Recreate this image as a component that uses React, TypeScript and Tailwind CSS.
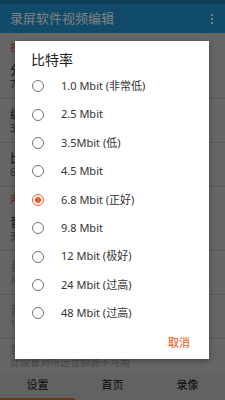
const font = { fontFamily: '"Noto Sans", "Noto Sans CJK SC", sans-serif' };

const rates = [
  "1.0 Mbit (非常低)",
  "2.5 Mbit",
  "3.5Mbit (低)",
  "4.5 Mbit",
  "6.8 Mbit (正好)",
  "9.8 Mbit",
  "12 Mbit (极好)",
  "24 Mbit (过高)",
  "48 Mbit (过高)",
];

function SettingRow({ title, value, muted }: { title: string; value: string; muted?: boolean }) {
  return (
    <div className="flex h-[44px] flex-col justify-center border-b border-[#b0b0b0] px-[10px]">
      <span className={`text-[12px] leading-[15px] ${muted ? "text-[#9a9a9a]" : "text-[#222]"}`}>{title}</span>
      <span className={`text-[10px] leading-[13px] ${muted ? "text-[#9a9a9a]" : "text-[#555]"}`}>{value}</span>
    </div>
  );
}

export default function App() {
  const selected = 4;
  return (
    <div className="relative h-[400px] w-[225px] overflow-hidden bg-[#cdcdcd]" style={font}>
      <div className="h-[4px] bg-[#1a7cb0]" />
      <div className="flex h-[29px] items-center justify-between bg-[#2296d4] pl-[10px] pr-[12px]">
        <span className="text-[13px] text-white">录屏软件视频编辑</span>
        <div className="flex flex-col gap-[2px]">
          <span className="h-[2px] w-[2px] bg-white" />
          <span className="h-[2px] w-[2px] bg-white" />
          <span className="h-[2px] w-[2px] bg-white" />
        </div>
      </div>

      <div className="flex flex-col">
        <div className="flex h-[22px] items-end px-[10px] text-[10px] text-[#e0502a]">视频</div>
        <SettingRow title="分辨率" value="720p" />
        <SettingRow title="编码器" value="3GP" />
        <SettingRow title="比特率" value="6.8 Mbit (正好)" />
        <div className="flex h-[20px] items-end px-[10px] text-[10px] text-[#e0502a]">声音</div>
        <SettingRow title="音频来源" value="无" />
        <SettingRow title="音频编码器" value="AAC" muted />
        <SettingRow title="音频比特率" value="128 kbps" muted />
        <div className="px-[10px] pt-[4px] text-[10px] leading-[13px] text-[#9a9a9a]">
          <div>音频采样率</div>
          <div>此设置对所选音频源不可用</div>
        </div>
      </div>

      <div className="absolute bottom-0 left-0 right-0 flex h-[27px] flex-col bg-[#c4c4c4]">
        <div className="grid flex-1 grid-cols-3 items-center text-center text-[11px] text-[#111]">
          <span>设置</span>
          <span>首页</span>
          <span>录像</span>
        </div>
        <div className="h-[2px] w-[75px] bg-[#e0702a]" />
      </div>

      <div className="absolute inset-0 bg-black/50" />

      <div className="absolute left-[15px] top-[41px] w-[194px] bg-white shadow-[0_2px_6px_rgba(0,0,0,0.35)]">
        <div className="flex h-[31px] items-end pb-[2px] pl-[16px] text-[14px] text-[#222]">比特率</div>
        <div className="flex flex-col">
          {rates.map((r, i) => (
            <div key={r} className="flex h-[28.4px] items-center">
              <div className="flex w-[46px] justify-center">
                {i === selected ? (
                  <span className="flex h-[12px] w-[12px] items-center justify-center rounded-full border-[1.5px] border-[#f05a28]">
                    <span className="h-[6px] w-[6px] rounded-full bg-[#f05a28]" />
                  </span>
                ) : (
                  <span className="h-[12px] w-[12px] rounded-full border-[1.5px] border-[#757575]" />
                )}
              </div>
              <span className="text-[11px] text-[#333]">{r}</span>
            </div>
          ))}
        </div>
        <div className="flex h-[31px] items-center justify-end pr-[19px]">
          <span className="text-[11px] font-medium text-[#f26b3a]">取消</span>
        </div>
      </div>
    </div>
  );
}
